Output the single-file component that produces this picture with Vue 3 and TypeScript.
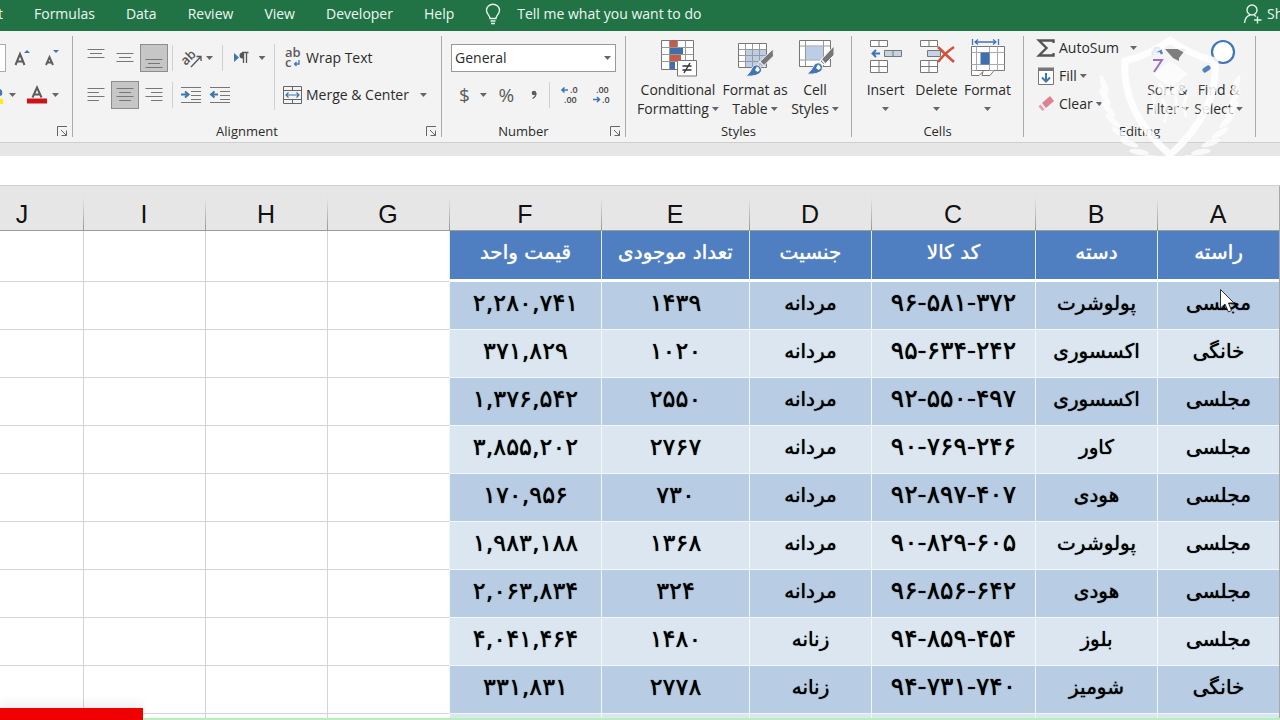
<script setup lang="ts">
interface Column { letter: string; size: string }

const tabs: string[] = ['Formulas', 'Data', 'Review', 'View', 'Developer', 'Help']

const columns: Column[] = [
  { letter: 'A', size: 'w-medium' },
  { letter: 'B', size: 'w-medium' },
  { letter: 'C', size: 'w-widest' },
  { letter: 'D', size: 'w-medium' },
  { letter: 'E', size: 'w-wide' },
  { letter: 'F', size: 'w-wider' },
  { letter: 'G', size: 'w-medium' },
  { letter: 'H', size: 'w-medium' },
  { letter: 'I', size: 'w-medium' },
  { letter: 'J', size: 'w-medium' },
]

const headings: string[] = ['راسته', 'دسته', 'کد کالا', 'جنسیت', 'تعداد موجودی', 'قیمت واحد']

const rows: string[][] = [
  ['مجلسی', 'پولوشرت', '۹۶-۵۸۱-۳۷۲', 'مردانه', '۱۴۳۹', '۲,۲۸۰,۷۴۱'],
  ['خانگی', 'اکسسوری', '۹۵-۶۳۴-۲۴۲', 'مردانه', '۱۰۲۰', '۳۷۱,۸۲۹'],
  ['مجلسی', 'اکسسوری', '۹۲-۵۵۰-۴۹۷', 'مردانه', '۲۵۵۰', '۱,۳۷۶,۵۴۲'],
  ['مجلسی', 'کاور', '۹۰-۷۶۹-۲۴۶', 'مردانه', '۲۷۶۷', '۳,۸۵۵,۲۰۲'],
  ['مجلسی', 'هودی', '۹۲-۸۹۷-۴۰۷', 'مردانه', '۷۳۰', '۱۷۰,۹۵۶'],
  ['مجلسی', 'پولوشرت', '۹۰-۸۲۹-۶۰۵', 'مردانه', '۱۳۶۸', '۱,۹۸۳,۱۸۸'],
  ['مجلسی', 'هودی', '۹۶-۸۵۶-۶۴۲', 'مردانه', '۳۲۴', '۲,۰۶۳,۸۳۴'],
  ['مجلسی', 'بلوز', '۹۴-۸۵۹-۴۵۴', 'زنانه', '۱۴۸۰', '۴,۰۴۱,۴۶۴'],
  ['خانگی', 'شومیز', '۹۴-۷۳۱-۷۴۰', 'زنانه', '۲۷۷۸', '۳۳۱,۸۳۱'],
]

const leaves: { x: number; y: number; turn: number }[] = [
  { x: 8, y: 54, turn: 70 },
  { x: 9, y: 66, turn: 60 },
  { x: 12, y: 78, turn: 50 },
  { x: 17, y: 90, turn: 42 },
  { x: 24, y: 102, turn: 32 },
  { x: 33, y: 112, turn: 20 },
  { x: 43, y: 121, turn: 8 },
  { x: 54, y: 127, turn: 0 },
]
</script>

<template>
  <div class="app">
    <nav class="tabs">
      <button class="tab tab-cut">Page Layout</button>
      <button v-for="t in tabs" :key="t" class="tab">{{ t }}</button>
      <button class="tab tell">
        <svg width="16" height="22" viewBox="0 0 16 22" fill="none" stroke="#e4f3ea" stroke-width="1.4">
          <path d="M5 15.500C5 12.500 1.500 11 1.500 7.200A6.500 6 0 0 1 14.500 7.200C14.500 11 11 12.500 11 15.500ZM5.500 18H10.500M6 20.500H10" />
        </svg>
        Tell me what you want to do
      </button>
      <button class="tab share">
        <svg width="20" height="20" viewBox="0 0 20 20" fill="none" stroke="#e4f3ea" stroke-width="1.4">
          <circle cx="9" cy="6" r="5" /><path d="M1.500 19C2 14 4.500 11.500 7.500 11M11 11L13 12.500M14.500 12.500V19.500M11 16H18.500" />
        </svg>
        Share
      </button>
    </nav>

    <section class="ribbon">
      <div class="group font-group">
        <div class="body">
          <div class="line">
            <input class="size-box" aria-label="Font size" />
            <button class="tool w28" aria-label="Increase font size">
              <svg width="18" height="18" viewBox="0 0 18 18"><path d="M1.500 16L6 5L10.500 16M3.300 12.500H9" fill="none" stroke="#5c5c5c" stroke-width="2" /><path d="M10 4L13 1L16 4Z" fill="#3f76b5" /></svg>
            </button>
            <button class="tool w28" aria-label="Decrease font size">
              <svg width="18" height="18" viewBox="0 0 18 18"><path d="M3 16L6.500 8L10 16M4.500 13.500H9" fill="none" stroke="#5c5c5c" stroke-width="1.900" /><path d="M10 1L16 1L13 4Z" fill="#3f76b5" /></svg>
            </button>
          </div>
          <div class="line">
            <button class="tool fill-tool" aria-label="Fill color">
              <svg width="3" height="20" viewBox="0 0 3 20"><path d="M0 4Q3 5 2 10L0 11Z" fill="#3f76b5" /><path d="M0 14H3V19H0Z" fill="#ffee00" /></svg>
              <i class="caret"></i>
            </button>
            <button class="tool color-tool" aria-label="Font color">
              <svg width="20" height="20" viewBox="0 0 20 20"><path d="M5.500 12.500L10 2.500L14.500 12.500M6.500 9.500H13.500" fill="none" stroke="#5c5c5c" stroke-width="2" /><path d="M0 13.500H20V18.500H0Z" fill="#d0121b" /></svg>
              <i class="caret"></i>
            </button>
          </div>
        </div>
        <footer class="caption">
          <span></span>
          <button class="launcher" aria-label="Font settings"><svg width="11" height="11" viewBox="0 0 11 11" fill="none" stroke="#666"><path d="M.5 10V.5H10M4 4L9.500 9.500M9.500 4.500V9.500H4.500" /></svg></button>
        </footer>
      </div>

      <div class="group align-group">
        <div class="body row">
          <div class="align-tools">
            <div class="line">
              <button class="tool w28" aria-label="Top align"><svg width="18" height="28" viewBox="0 0 18 28" stroke="#777"><path d="M.5 5.500H17.500M3 9.500H15M.5 13.500H17.500" /></svg></button>
              <button class="tool w28" aria-label="Middle align"><svg width="18" height="28" viewBox="0 0 18 28" stroke="#777"><path d="M.5 9.500H17.500M3 13.500H15M.5 17.500H17.500" /></svg></button>
              <button class="tool w28 on" aria-label="Bottom align"><svg width="18" height="28" viewBox="0 0 18 28" stroke="#777"><path d="M.5 15.500H17.500M3 19.500H15M.5 23.500H17.500" /></svg></button>
              <span class="sep"></span>
              <button class="tool orient" aria-label="Orientation">
                <svg width="22" height="22" viewBox="0 0 22 22"><text x="0" y="14" transform="rotate(-45 8 12)" font-size="13" font-weight="600" fill="#555">ab</text><path d="M9 20L19 9.500M14.500 9.500H19V14" fill="none" stroke="#555" stroke-width="1.300" /></svg>
                <i class="caret"></i>
              </button>
              <span class="sep"></span>
              <button class="tool para" aria-label="Text direction">
                <svg width="16" height="14" viewBox="0 0 16 14"><path d="M1 2L6 6.500L1 11Z" fill="#3f76b5" /><path d="M15 1.500H9.500A3 3 0 0 0 9.500 7.500H10.500V1.500Z" fill="#555" /><path d="M10.500 1.500V12M13.500 1.500V12M9 1.500H15.500" stroke="#555" stroke-width="1.300" /></svg>
                <i class="caret"></i>
              </button>
            </div>
            <div class="line">
              <button class="tool w28" aria-label="Align left"><svg width="18" height="14" viewBox="0 0 18 14" stroke="#777"><path d="M.5 .5H17.500M.5 4.500H12M.5 8.500H17.500M.5 12.500H12" /></svg></button>
              <button class="tool w28 on" aria-label="Center"><svg width="18" height="14" viewBox="0 0 18 14" stroke="#777"><path d="M.5 .5H17.500M3 4.500H15M.5 8.500H17.500M3 12.500H15" /></svg></button>
              <button class="tool w28" aria-label="Align right"><svg width="18" height="14" viewBox="0 0 18 14" stroke="#777"><path d="M.5 .5H17.500M6 4.500H17.500M.5 8.500H17.500M6 12.500H17.500" /></svg></button>
              <span class="sep"></span>
              <button class="tool w28" aria-label="Decrease indent"><svg width="20" height="16" viewBox="0 0 20 16" fill="none" stroke="#777"><path d="M0 .5H20M10 4.500H20M10 8.500H20M10 12.500H20M0 15.500H20" /><path d="M0 7.500H7M4 4.500L7.500 7.500L4 10.500" stroke="#3f76a5" stroke-width="2" /></svg></button>
              <button class="tool w28" aria-label="Increase indent"><svg width="20" height="16" viewBox="0 0 20 16" fill="none" stroke="#777"><path d="M0 .5H20M10 4.500H20M10 8.500H20M10 12.500H20M0 15.500H20" /><path d="M8 7.500H1M4.500 4.500L1 7.500L4.500 10.500" stroke="#3f76a5" stroke-width="2" /></svg></button>
            </div>
          </div>
          <span class="sep tall"></span>
          <div>
            <div class="line">
              <button class="tool text-tool">
                <svg width="20" height="20" viewBox="0 0 20 20"><text x="2" y="9" font-size="13" font-weight="600" fill="#5c5c5c">ab</text><text x="2" y="19" font-size="13" font-weight="600" fill="#5c5c5c">c</text><path d="M16 12V16H11.500M13.500 14L11.500 16L13.500 18" fill="none" stroke="#3f76b5" stroke-width="1.300" /></svg>
                Wrap Text
              </button>
            </div>
            <div class="line">
              <button class="tool text-tool">
                <svg width="20" height="20" viewBox="0 0 20 20" fill="none" stroke="#666"><path d="M.5 1.500H18.500V18.500H.5ZM.5 5.500H18.500M.5 14.500H18.500M9.500 1.500V5.500M9.500 14.500V18.500" /><path d="M3 10H16M5.500 7.500L3 10L5.500 12.500M13.500 7.500L16 10L13.500 12.500" stroke="#3f76a5" stroke-width="1.200" /></svg>
                Merge &amp; Center<i class="caret far"></i>
              </button>
            </div>
          </div>
        </div>
        <footer class="caption"><span>Alignment</span>
          <button class="launcher" aria-label="Alignment settings"><svg width="11" height="11" viewBox="0 0 11 11" fill="none" stroke="#666"><path d="M.5 10V.5H10M4 4L9.500 9.500M9.500 4.500V9.500H4.500" /></svg></button>
        </footer>
      </div>

      <div class="group number-group">
        <div class="body">
          <div class="line">
            <div class="select-box">
              <select aria-label="Number format"><option>General</option></select>
              <i class="caret"></i>
            </div>
          </div>
          <div class="line spread">
            <button class="tool sign">$<i class="caret"></i></button>
            <button class="tool sign">%</button>
            <button class="tool comma" aria-label="Comma style">
              <svg width="8" height="12" viewBox="0 0 8 12"><circle cx="4" cy="4" r="2.300" fill="#5c5c5c" /><path d="M6 4Q6 8 2.500 9.500" fill="none" stroke="#5c5c5c" stroke-width="1.300" /></svg>
            </button>
            <span class="sep"></span>
            <button class="tool w28" aria-label="Increase decimal">
              <svg width="20" height="20" viewBox="0 0 20 20" font-size="9" font-weight="600" fill="#444"><text x="10" y="8">.0</text><text x="4" y="18">.00</text><path d="M8 5H2M4.500 2.500L2 5L4.500 7.500" fill="none" stroke="#3f76b5" stroke-width="1.600" /></svg>
            </button>
            <button class="tool w28" aria-label="Decrease decimal">
              <svg width="20" height="20" viewBox="0 0 20 20" font-size="9" font-weight="600" fill="#444"><text x="4" y="8">.00</text><text x="10" y="18">.0</text><path d="M1 14.500H7M5 12L7.500 14.500L5 17" fill="none" stroke="#3f76b5" stroke-width="1.600" /></svg>
            </button>
          </div>
        </div>
        <footer class="caption"><span>Number</span>
          <button class="launcher" aria-label="Number settings"><svg width="11" height="11" viewBox="0 0 11 11" fill="none" stroke="#666"><path d="M.5 10V.5H10M4 4L9.500 9.500M9.500 4.500V9.500H4.500" /></svg></button>
        </footer>
      </div>

      <div class="group styles-group">
        <div class="body row">
          <button class="big b-xl">
            <svg width="38" height="38" viewBox="0 0 38 38"><path d="M2.500 1.500H34.500V30.500H2.500Z" fill="#fff" stroke="#777" /><path d="M11 1.500H18V9H11ZM11 16H22V23H11Z" fill="#c95b45" /><path d="M11 9H24V16H11ZM11 23H16V30.500H11Z" fill="#3f70ad" /><path d="M2.500 8.500H34.500M2.500 15.500H34.500M2.500 22.500H34.500M10.500 1.500V30.500M18.500 1.500V8M26.500 1.500V30.500" fill="none" stroke="#999" /><path d="M18.500 21.500H37.500V37H18.500Z" fill="#fff" stroke="#777" /><path d="M23.500 27H32.500M23.500 31H32.500M31 24L25 34" stroke="#333" stroke-width="1.400" /></svg>
            <span>Conditional</span><span>Formatting<i class="caret"></i></span>
          </button>
          <button class="big b-lg">
            <svg width="38" height="38" viewBox="0 0 38 38"><path d="M2.500 4.500H30.500V28.500H2.500Z" fill="#fff" /><path d="M9.500 10.500H30.500V28.500H9.500Z" fill="#bccde8" /><path d="M2.500 10.500H30.500M2.500 16.500H30.500M2.500 22.500H30.500M9.500 4.500V28.500M16.500 4.500V28.500M23.500 4.500V28.500" stroke="#999" /><path d="M2.500 4.500H30.500V28.500H2.500Z" fill="none" stroke="#777" /><path d="M37 10L22.500 24L26.500 28L37.500 17Z" fill="#777" stroke="#f3f3f3" /><path d="M23 22L29 28" stroke="#f3f3f3" stroke-width="1.500" /><path d="M10 37Q14 34 15.500 30Q17.500 25 22 26Q27 29 25 33Q21 38 10 37Z" fill="#3f76b5" stroke="#f3f3f3" /><path d="M19 31L21 27.500Q24 29 23.500 31.500L21.500 33Z" fill="#fff" /></svg>
            <span>Format as</span><span>Table<i class="caret"></i></span>
          </button>
          <button class="big b-md">
            <svg width="38" height="38" viewBox="0 0 38 38"><path d="M3.500 1.500H34.500V27.500H3.500Z" fill="#fff" /><path d="M9.500 7.500H27V20.500H9.500Z" fill="#bccde8" /><path d="M3.500 7H34.500M3.500 21H34.500M9.500 1.500V27.500M27.500 1.500V27.500" stroke="#999" /><path d="M3.500 1.500H34.500V27.500H3.500Z" fill="none" stroke="#777" /><path d="M38 7L24 22L28 26L38 16Z" fill="#777" stroke="#f3f3f3" /><path d="M25 20L30 26" stroke="#f3f3f3" stroke-width="1.500" /><path d="M11 35Q15 32 17 28Q19 23 24 24Q28 27 26 31Q22 36 11 35Z" fill="#3f76b5" stroke="#f3f3f3" /><path d="M20 29L22 25.500Q25 27 24.500 29.500L22.500 31Z" fill="#fff" /></svg>
            <span>Cell</span><span>Styles<i class="caret"></i></span>
          </button>
        </div>
        <footer class="caption"><span>Styles</span></footer>
      </div>

      <div class="group cells-group">
        <div class="body row">
          <button class="big b-sm">
            <svg width="34" height="38" viewBox="0 0 34 38" fill="#fff" stroke="#777"><path d="M1.500 1.500H18.500V7.500H1.500ZM10 1.500V7.500M1.500 21.500H18.500V33.500H1.500ZM10 21.500V33.500M1.500 27.500H18.500" /><path d="M15.500 11.500H32.500V17.500H15.500ZM24 11.500V17.500" fill="#c5d3e3" /><path d="M11 14.500H3.500M7 11L3.500 14.500L7 18" fill="none" stroke="#3f76b5" stroke-width="2" /></svg>
            <span>Insert</span><i class="caret"></i>
          </button>
          <button class="big b-sm">
            <svg width="38" height="38" viewBox="0 0 38 38" fill="#fff" stroke="#777"><path d="M2.500 1.500H19.500V7.500H2.500ZM11 1.500V7.500M2.500 21.500H19.500V33.500H2.500ZM11 21.500V33.500M2.500 27.500H19.500" /><path d="M9.500 11.500H22.500V17.500H9.500Z" fill="#c5d3e3" /><path d="M20 8Q28 16 36 23M36 8Q27 14 20 23" fill="none" stroke="#d0533c" stroke-width="2.600" /></svg>
            <span>Delete</span><i class="caret"></i>
          </button>
          <button class="big b-sm">
            <svg width="36" height="38" viewBox="0 0 36 38" fill="#fff" stroke="#777"><path d="M1.500 7.500H34.500V31.500H1.500Z" /><path d="M1.500 13.500H34.500M1.500 25.500H34.500M6.500 7.500V31.500M19.500 7.500V31.500M27.500 7.500V31.500" fill="none" stroke="#aaa" /><path d="M10.500 13.500H19.500V25.500H10.500Z" fill="#3f70ad" stroke="none" /><path d="M1.500 31.500V36.500H9L13 32.500M13 32.500L12 36.500H20L24 31.500" /><path d="M2.500 0V6M28.500 0V6M5 3H26M8 .5L5 3L8 5.500M23 .5L26 3L23 5.500" fill="none" stroke="#3f76b5" stroke-width="1.300" /></svg>
            <span>Format</span><i class="caret"></i>
          </button>
        </div>
        <footer class="caption"><span>Cells</span></footer>
      </div>

      <div class="group editing-group">
        <div class="body row">
          <div class="stack">
            <button class="tool text-tool">
              <svg width="20" height="20" viewBox="0 0 20 20"><path d="M17.500 5V2.500H3L10.500 10L3 17.500H17.500V15" fill="none" stroke="#555" stroke-width="2.400" /></svg>
              AutoSum<i class="caret far"></i>
            </button>
            <button class="tool text-tool">
              <svg width="20" height="20" viewBox="0 0 20 20"><path d="M2.500 2.500H17.500V18.500H2.500Z" fill="#fff" stroke="#777" /><path d="M2 1.500H18V5H2Z" fill="#777" /><path d="M10 7V15M6 11.500L10 15.500L14 11.500" fill="none" stroke="#3f76b5" stroke-width="2" /></svg>
              Fill<i class="caret"></i>
            </button>
            <button class="tool text-tool">
              <svg width="20" height="20" viewBox="0 0 20 20"><path d="M6 9L14 2L18 7L10 14Z" fill="#e08193" /><path d="M4.500 10.500L8.500 15.500L6.500 17L2.500 12.500Z" fill="#eb9dab" /></svg>
              Clear<i class="caret"></i>
            </button>
          </div>
          <button class="big b-sm">
            <svg width="38" height="38" viewBox="0 0 38 38"><path d="M3 15L6 9H10L13 15M5 12H13" fill="none" stroke="#3f76b5" stroke-width="2.500" /><path d="M4 21H13L5 33" fill="none" stroke="#9560b8" stroke-width="2" /><path d="M16 10H37L30 19V22L24 19Z" fill="#707070" /></svg>
            <span>Sort &amp;</span><span>Filter<i class="caret"></i></span>
          </button>
          <button class="big b-sm">
            <svg width="38" height="38" viewBox="0 0 38 38"><circle cx="23" cy="13" r="11" fill="#fff" stroke="#3f76b5" stroke-width="2.200" /><path d="M5 31L8 29" stroke="#3f76b5" stroke-width="5" stroke-linecap="round" /></svg>
            <span>Find &amp;</span><span>Select<i class="caret"></i></span>
          </button>
        </div>
        <footer class="caption"><span>Editing</span></footer>
      </div>

      <svg class="crest" width="148" height="136" viewBox="0 0 148 136" aria-hidden="true">
        <path d="M74 9Q53 24 29 30Q25 80 74 124Q123 80 119 30Q95 24 74 9Z" fill="#fff" fill-opacity=".1" stroke="#fff" stroke-opacity=".85" stroke-width="7" />
        <g fill="#fff" fill-opacity=".75">
          <path d="M74 30L92 43L74 57L57 43ZM62 51L74 60L88 51V60Q74 69 62 60Z" />
          <ellipse v-for="l in leaves" :key="l.y" :cx="l.x" :cy="l.y" rx="10" ry="3" :transform="`rotate(${l.turn} ${l.x} ${l.y})`" />
          <ellipse v-for="l in leaves" :key="-l.y" :cx="148 - l.x" :cy="l.y" rx="10" ry="3" :transform="`rotate(${-l.turn} ${148 - l.x} ${l.y})`" />
        </g>
        <path d="M56 62Q60 70 58 84M66 68L72 80L68 92M80 66V82M92 62Q86 72 90 86" fill="none" stroke="#fff" stroke-opacity=".75" stroke-width="3" />
      </svg>
    </section>

    <input class="formula" aria-label="Formula bar" />

    <main class="sheet" dir="rtl">
      <table>
        <colgroup><col v-for="c in columns" :key="c.letter" :class="c.size" /></colgroup>
        <thead>
          <tr class="letters"><th v-for="c in columns" :key="c.letter" scope="col">{{ c.letter }}</th></tr>
        </thead>
        <tbody>
          <tr class="heads">
            <th v-for="h in headings" :key="h" scope="col">{{ h }}</th>
            <td v-for="n in 4" :key="n" class="blank"></td>
          </tr>
          <tr v-for="(r, i) in rows" :key="i" class="data">
            <td v-for="(c, j) in r" :key="j" :class="{ digits: j > 3, code: j === 2 }">{{ c }}</td>
            <td v-for="n in 4" :key="'b' + n" class="blank"></td>
          </tr>
          <tr class="data">
            <td v-for="n in 6" :key="n"></td>
            <td v-for="n in 4" :key="'b' + n" class="blank"></td>
          </tr>
        </tbody>
      </table>
      <svg class="pointer" width="18" height="26" viewBox="0 0 18 26" aria-hidden="true"><path d="M1.500 1.500V20L6 16L9.500 24L12.500 22.500L9.500 15H15Z" fill="#fff" stroke="#333" /></svg>
    </main>
    <div class="bottom-line"></div>
    <div class="progress"></div>
  </div>
</template>

<style>
body { margin: 0; overflow: hidden; }
</style>

<style scoped>
* { box-sizing: border-box; }
.app { position: relative; height: 100vh; overflow: hidden; display: flex; flex-direction: column; background: #fff; color: #2b2b2b; font: 14px/20px "Open Sans", "Noto Sans", sans-serif; }
button { border: 0; padding: 0; background: none; color: inherit; font: inherit; white-space: nowrap; }
svg { flex: none; display: block; overflow: visible; }
svg text { font-family: "Open Sans", sans-serif; }

.tabs { flex: none; height: 31px; display: flex; align-items: center; gap: 31px; padding-bottom: 4px; background: #217346; color: #eef8f2; overflow: hidden; }
.tab { flex: none; }
.tab-cut { width: 3px; display: flex; justify-content: flex-end; overflow: hidden; }
.tell { display: flex; align-items: center; gap: 16px; }
.share { display: flex; align-items: center; gap: 4px; width: 37px; margin-left: auto; }

.ribbon { position: relative; flex: none; display: flex; height: 112px; padding: 5px 0; background: #f3f3f3; border-bottom: 1px solid #cfcfcf; }
.group { flex: none; display: flex; flex-direction: column; border-right: 1px solid #aaa; }
.font-group { width: 73px; }
.align-group { width: 369px; }
.number-group { width: 184px; }
.styles-group { width: 226px; }
.cells-group { width: 172px; }
.editing-group { width: 232px; }
.body { flex: 1; }
.row { display: flex; }
.line { display: flex; align-items: center; height: 28px; gap: 1px; margin-top: 8px; }
.line + .line { margin-top: 9px; }
.caption { display: flex; align-items: center; height: 12px; font-size: 13px; line-height: 12px; text-align: center; }
.caption span { flex: 1; }
.launcher { width: 20px; padding-left: 5px; }
.caret { display: inline-block; flex: none; width: 7px; height: 4px; background: #666; clip-path: polygon(0 0, 100% 0, 50% 100%); }
.tool { flex: none; display: flex; align-items: center; justify-content: center; height: 28px; }
.w28 { width: 28px; }
.on { background: #c6c6c6; border: 1px solid #8d8d8d; }
.sep { flex: none; width: 1px; height: 26px; margin: 0 3px; background: #d0d0d0; }
.tall { height: 66px; margin: 8px 6px 0 0; }

.size-box { width: 6px; height: 28px; margin-right: 2px; padding: 0; border: 1px solid #ababab; border-left: 0; background: #fff; }
.fill-tool { gap: 6px; width: 25px; justify-content: flex-start; }
.color-tool { gap: 5px; width: 34px; }

.align-tools { width: 201px; padding-left: 9px; }
.orient { width: 41px; gap: 2px; }
.para { width: 44px; gap: 10px; }
.text-tool { gap: 3px; padding: 0 2px; }
.far { margin-left: 8px; }

.number-group .body { padding: 0 9px; }
.select-box { position: relative; flex: 1; display: flex; align-items: center; }
.select-box select { flex: 1; height: 28px; appearance: none; border: 1px solid #999; border-radius: 0; background: #fff; padding: 0 3px; color: inherit; font: inherit; }
.select-box .caret { position: absolute; right: 5px; }
.spread { justify-content: space-between; }
.sign { gap: 10px; padding-left: 8px; font-size: 19px; color: #5c5c5c; }
.comma { padding: 0 4px 0 12px; }

.big { display: flex; flex-direction: column; align-items: center; height: 84px; padding-top: 3px; line-height: 19px; }
.big > svg { margin-bottom: 3px; }
.big span .caret { margin: 0 0 3px 3px; }
.big > .caret { margin-top: 8px; }
.b-xl { width: 86px; }
.b-lg { width: 68px; }
.b-md { width: 52px; }
.b-sm { width: 51px; }
.styles-group .row { padding-left: 9px; }
.cells-group .row { padding-left: 8px; }
.editing-group .row { padding: 0 11px 0 10px; }
.stack { flex: 1; display: flex; flex-direction: column; align-items: flex-start; margin-top: -2px; }
.crest { position: absolute; left: 1096px; top: 0; }

.formula { flex: none; display: block; width: 100%; height: 43px; padding: 0; border: 0; border-top: 13px solid #e6e6e6; border-bottom: 1px solid #cfcfcf; border-radius: 0; background: #fff; }

.sheet { position: relative; flex: 1; min-height: 0; overflow: hidden; border-right: 1px solid #a8a8a8; background: #fff; }
table { border-collapse: separate; border-spacing: 0; table-layout: fixed; width: 1318px; }
.w-medium { width: 122px; }
.w-wide { width: 148px; }
.w-wider { width: 152px; }
.w-widest { width: 164px; }
th, td { padding: 0; text-align: center; font-weight: 400; white-space: nowrap; overflow: hidden; }
.letters th { height: 45px; padding-top: 12px; background: linear-gradient(transparent 25%, #999) left top / 1px 100% no-repeat, #e6e6e6; border-bottom: 1px solid #9b9b9b; color: #111; font: 25px/30px "Liberation Sans", Arial, sans-serif; }
.heads th { height: 51px; padding-bottom: 6px; background: #4f7fc0; border-left: 1px solid #dff0f4; border-bottom: 3px solid #fff; color: #fff; font: 20px/30px "DejaVu Sans", sans-serif; text-shadow: 0 0 1px #fff; }
.data td { height: 48px; padding-bottom: 6px; background: #dce6f1; border-left: 1px solid #eefafa; border-bottom: 1px solid #eefafa; color: #000; font: 20px/30px "DejaVu Sans", sans-serif; text-shadow: 0 0 1px #000; }
.data:nth-child(even) td { background: #b8cce4; }
.data .digits { font-size: 24px; }
.data .code { font-size: 25px; }
.heads .blank, .data .blank, .data:nth-child(even) .blank { background: #fff; border-left: 1px solid #d4d4d4; border-bottom: 1px solid #d4d4d4; }
.pointer { position: absolute; top: 102px; right: 42px; }
.progress { position: absolute; left: 0; bottom: 0; width: 143px; height: 12px; background: #f00000; box-shadow: 0 -5px 10px #0001; }
.bottom-line { position: absolute; left: 0; right: 0; bottom: 0; height: 2px; background: #b9efc0; }
</style>
